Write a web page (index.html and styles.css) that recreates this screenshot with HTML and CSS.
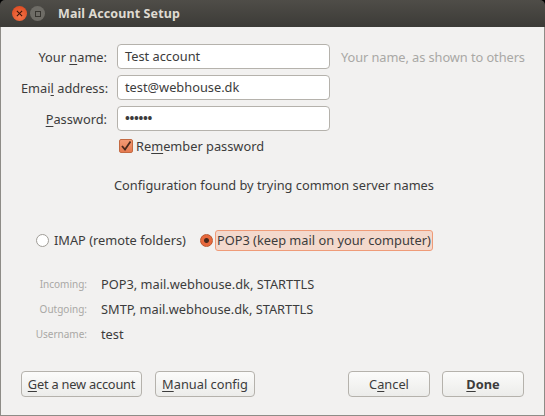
FILE: index.html
```html
<!DOCTYPE html>
<html lang="en">
<head>
  <meta charset="UTF-8" />
  <title>Mail Account Setup</title>
  <link rel="stylesheet" href="styles.css">
</head>
<body>
  <div class="window">
    <div class="titlebar">
      <span class="win-btn btn-close">
        <svg viewBox="0 0 8 8" width="7" height="7"><path d="M1 1 L7 7 M7 1 L1 7" stroke="#3a1408" stroke-width="1.2" fill="none" /></svg>
      </span>
      <span class="win-btn btn-max"><span class="max-box"></span></span>
      <span class="title">Mail Account Setup</span>
    </div>

    <div class="content">
      <div class="form">
        <label class="field-label">Your <u>n</u>ame:</label>
        <div class="input">Test account</div>
        <span class="hint">Your name, as shown to others</span>

        <label class="field-label">Emai<u>l</u> address:</label>
        <div class="input">test@webhouse.dk</div>
        <span></span>

        <label class="field-label"><u>P</u>assword:</label>
        <div class="input dots">••••••</div>
        <span></span>
      </div>

      <div class="remember">
        <span class="checkbox">
          <svg viewBox="0 0 14 14" width="14" height="14"><path d="M3 7 L6 10.5 L11.5 2.5" stroke="#4a2a1c" stroke-width="1.8" fill="none" /></svg>
        </span>
        <span>Re<u>m</u>ember password</span>
      </div>

      <p class="status">Configuration found by trying common server names</p>

      <div class="protocols">
        <div class="radio-item">
          <span class="radio"></span>
          <span class="radio-text">IMAP (remote folders)</span>
        </div>
        <div class="radio-item">
          <span class="radio radio-on"></span>
          <span class="radio-text selected">POP3 (keep mail on your computer)</span>
        </div>
      </div>

      <div class="details">
        <span class="detail-label">Incoming:</span>
        <span>POP3, mail.webhouse.dk, STARTTLS</span>
        <span class="detail-label">Outgoing:</span>
        <span>SMTP, mail.webhouse.dk, STARTTLS</span>
        <span class="detail-label">Username:</span>
        <span>test</span>
      </div>

      <div class="actions">
        <button class="btn btn-new"><u>G</u>et a new account</button>
        <button class="btn btn-manual"><u>M</u>anual config</button>
        <span class="spacer"></span>
        <button class="btn btn-cancel">C<u>a</u>ncel</button>
        <button class="btn btn-done"><u>D</u>one</button>
      </div>
    </div>
  </div>
</body>
</html>
```

FILE: styles.css
```css
* {
  box-sizing: border-box;
}

html,
body {
  margin: 0;
  height: 416px;
  overflow: hidden;
  background: #000;
}

body {
  font-family: "Noto Sans", sans-serif;
  font-size: 12.8px;
  color: #3c3c3c;
}

u {
  text-underline-offset: 2px;
}

.window {
  width: 545px;
  height: 416px;
  display: flex;
  flex-direction: column;
  border-radius: 5px 5px 0 0;
  overflow: hidden;
}

.titlebar {
  height: 27px;
  flex: none;
  display: flex;
  align-items: center;
  padding-left: 12px;
  background: linear-gradient(#4f4d48, #3c3b37);
}

.win-btn {
  width: 15px;
  height: 15px;
  border-radius: 50%;
  display: flex;
  align-items: center;
  justify-content: center;
}

.btn-close {
  background: radial-gradient(circle at 50% 70%, #f5754a, #d8431a);
  margin-right: 3px;
}

.btn-max {
  background: #6e6c66;
}

.max-box {
  width: 6px;
  height: 6px;
  border: 1px solid #36342f;
}

.title {
  margin-left: 13px;
  font-weight: 700;
  font-size: 12.5px;
  letter-spacing: 0.1px;
  color: #dfdbd2;
}

.content {
  flex: 1;
  background: #f2f1f0;
  border: 1px solid #8e8c87;
  border-top: none;
  padding: 17px 20px 0 20px;
  display: flex;
  flex-direction: column;
}

.form {
  display: grid;
  grid-template-columns: 86px 213px 1fr;
  column-gap: 10px;
  row-gap: 6px;
  align-items: center;
}

.field-label {
  text-align: right;
  white-space: nowrap;
}

.input {
  height: 25px;
  line-height: 23px;
  padding-left: 7px;
  background: #fff;
  border: 1px solid #b5b2ac;
  border-radius: 4px;
}

.dots {
  font-weight: 700;
  letter-spacing: -0.3px;
}

.hint {
  margin-left: 1px;
  letter-spacing: -0.07px;
  color: #a9a8a5;
  white-space: nowrap;
}

.remember {
  display: flex;
  align-items: center;
  gap: 3px;
  margin: 8px 0 0 98px;
  height: 14px;
}

.checkbox {
  width: 14px;
  height: 14px;
  background: linear-gradient(#f29a74, #e57a50);
  border: 1px solid #c46a42;
  border-radius: 2px;
  display: flex;
}

.checkbox svg {
  margin: -1px;
}

.status {
  margin: 23px 0 0 0;
  padding-left: 93px;
  line-height: 18px;
}

.protocols {
  display: flex;
  align-items: center;
  margin: 36px 0 0 15px;
  height: 21px;
}

.radio-item {
  display: flex;
  align-items: center;
  gap: 2px;
  margin-right: 12px;
}

.radio {
  width: 13px;
  height: 13px;
  border-radius: 50%;
  border: 1px solid #a09d97;
  background: #fff;
  flex: none;
  margin-right: 1px;
}

.radio-on {
  margin-right: 0;
  background: radial-gradient(circle, #4a2a1c 0 2px, #e8693d 3px);
  border-color: #b9562f;
}

.radio-text {
  padding: 0 1px;
  line-height: 19px;
  border: 1px solid transparent;
  border-radius: 3px;
  white-space: nowrap;
}

.selected {
  background: #f3d9cd;
  border-color: #ef9b78;
}

.details {
  display: grid;
  grid-template-columns: 66px 1fr;
  column-gap: 14px;
  grid-auto-rows: 25px;
  align-items: center;
  margin-top: 21px;
  line-height: 25px;
}

.detail-label {
  text-align: right;
  font-size: 10px;
  color: #a9a8a5;
}

.actions {
  display: flex;
  margin-top: 24px;
}

.spacer {
  flex: 1;
}

.btn {
  height: 26px;
  padding: 0;
  font: inherit;
  color: inherit;
  background: linear-gradient(#fbfbfa, #ececea);
  border: 1px solid #b5b2ac;
  border-radius: 4px;
}

.btn-new {
  width: 121px;
  margin-right: 13px;
  letter-spacing: -0.2px;
}

.btn-manual {
  width: 100px;
}

.btn-cancel {
  width: 82px;
  margin-right: 12px;
}

.btn-done {
  width: 82px;
  font-weight: 700;
}
```
